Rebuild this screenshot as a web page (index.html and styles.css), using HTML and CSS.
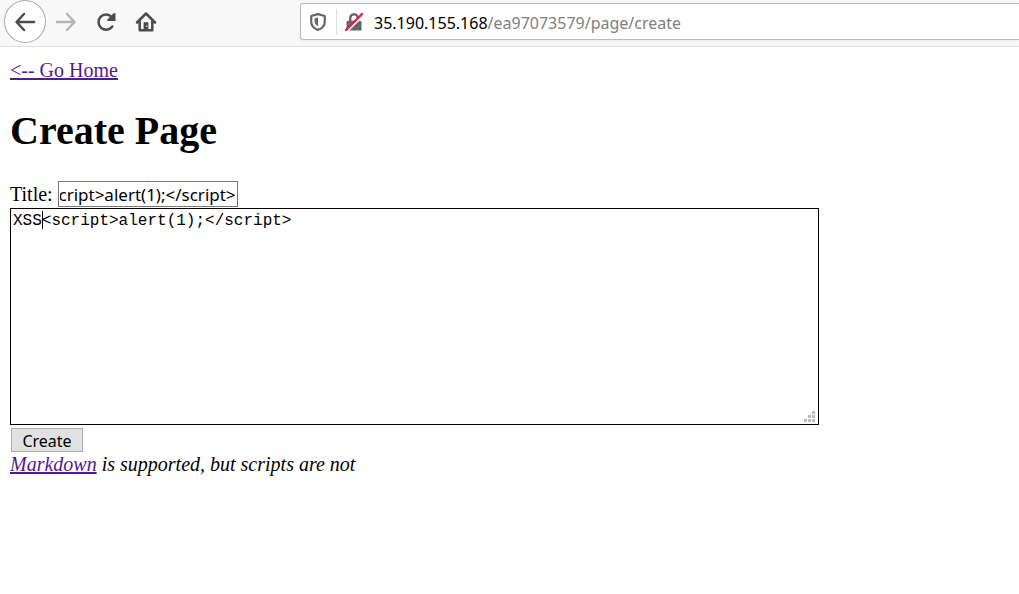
FILE: index.html
```html
<!DOCTYPE html>
<html lang="en">
<head>
<meta charset="utf-8">
<title>Create Page</title>
<link rel="stylesheet" href="styles.css">
</head>
<body>
<header class="toolbar">
  <nav class="nav-buttons" aria-label="Browser navigation">
    <button class="nav-button nav-back" type="button" aria-label="Back">
      <svg class="icon" viewBox="0 0 22 22"><path d="M20 11H3M10 3L2.5 11L10 19"/></svg>
    </button>
    <button class="nav-button nav-forward" type="button" aria-label="Forward" disabled>
      <svg class="icon" viewBox="0 0 22 22"><path d="M2 11H19M12 3L19.5 11L12 19"/></svg>
    </button>
    <button class="nav-button" type="button" aria-label="Reload">
      <svg class="icon" viewBox="0 0 22 22"><path d="M17.3 15.5A7.6 7.6 0 1 1 16.6 5.8"/><path class="solid" d="M20.5 2.2V10H12.4V8.6L18.6 2.2Z"/></svg>
    </button>
    <button class="nav-button" type="button" aria-label="Home">
      <svg class="icon" viewBox="0 0 22 22"><path d="M2 11.5L11 2.5L20 11.5M4.7 10V19.3H17.3V10"/><path class="solid" d="M8.6 11.2H13.4V19H8.6Z"/><path class="knob" d="M11.3 14.5H12.4V16H11.3Z"/></svg>
    </button>
  </nav>
  <div class="address-bar">
    <svg class="shield" viewBox="0 0 18 20"><path class="shield-line" d="M9 2.1L15.8 4V9.2C15.8 13.2 13 16.5 9 17.9C5 16.5 2.2 13.2 2.2 9.2V4Z"/><path class="shield-half" d="M9 5.5V14.4C6.8 13 5.6 11.3 5.6 9V6.3Z"/></svg>
    <span class="divider"></span>
    <svg class="lock" viewBox="0 0 20 20"><path class="shackle" d="M6.2 9V6.2A3.8 4 0 0 1 13.8 6.2V9"/><path class="lock-body" d="M4 8.8H16Q17.5 8.8 17.5 10.3V18.5H2.5V10.3Q2.5 8.8 4 8.8Z"/><path class="slash-gap" d="M3 19.5L19.5 3"/><path class="slash" d="M2 18L18 2"/></svg>
    <div class="address"><span class="host">35.190.155.168</span>/ea97073579/page/create</div>
  </div>
</header>
<main class="page">
  <a class="link" href="#home">&lt;-- Go Home</a>
  <h1 class="heading">Create Page</h1>
  <form class="form">
    <div class="title-row">
      <label for="title">Title:</label>
      <input class="title-input" id="title" type="text" value="&lt;script&gt;alert(1);&lt;/script&gt;">
    </div>
    <div class="editor">
      <textarea class="body-input" aria-label="Page body" spellcheck="false">XSS&lt;script&gt;alert(1);&lt;/script&gt;</textarea>
      <span class="caret"></span>
      <svg class="grip" viewBox="0 0 11 11"><path d="M8 0h3v3h-3zM4 4h3v3h-3zM8 4h3v3h-3zM0 8h3v3h-3zM4 8h3v3h-3zM8 8h3v3h-3z"/></svg>
    </div>
    <button class="create-button" type="button">Create</button>
  </form>
  <div class="note"><a class="link" href="#markdown">Markdown</a> is supported, but scripts are not</div>
</main>
<script src="script.js"></script>
</body>
</html>
```
FILE: styles.css
```css
* { box-sizing: border-box; }
body {
  margin: 0;
  background: #fff;
  color: #000;
  font: 20px/22px "Liberation Serif", serif;
}
.toolbar {
  display: flex;
  align-items: flex-start;
  gap: 134px;
  height: 47px;
  padding-left: 4px;
  background: #f8f8f8;
  border-bottom: 1px solid #dedede;
}
.nav-buttons { display: flex; flex: none; }
.nav-button {
  display: grid;
  place-items: center;
  width: 40px;
  height: 43px;
  padding: 0;
  border: 0;
  background: none;
  color: #4c4c4c;
}
.nav-back {
  width: 42px;
  border: 1px solid #aaa;
  border-radius: 50%;
  background: #fff;
}
.nav-forward { color: #b5b5b5; }
.icon {
  width: 22px;
  height: 22px;
  fill: none;
  stroke: currentColor;
  stroke-width: 2.5;
  stroke-linecap: round;
  stroke-linejoin: round;
}
.icon .solid { fill: currentColor; stroke: none; }
.icon .knob { fill: #fff; stroke: none; }
.address-bar {
  display: flex;
  flex: 1;
  align-items: center;
  min-width: 0;
  height: 37px;
  margin-top: 3px;
  padding-left: 8px;
  border: 1px solid #b9b9b9;
  border-right: 0;
  border-radius: 3px 0 0 3px;
  background: #fff;
  box-shadow: 0 1px 4px #0000000d;
}
.shield { width: 18px; height: 20px; flex: none; }
.shield-line { fill: none; stroke: #666; stroke-width: 2.2; stroke-linejoin: round; }
.shield-half { fill: #666; }
.divider { width: 1px; height: 26px; margin: 0 7px 0 9px; background: #ddd; flex: none; }
.lock { width: 20px; height: 20px; flex: none; }
.shackle { fill: none; stroke: #666; stroke-width: 2.4; }
.lock-body { fill: #666; }
.slash-gap { fill: none; stroke: #fff; stroke-width: 2; }
.slash { fill: none; stroke: #f5174b; stroke-width: 2.4; stroke-linecap: round; }
.address {
  margin-left: 10px;
  padding-top: 2px;
  color: #808080;
  font: 16px/24px "Noto Sans", sans-serif;
  white-space: nowrap;
}
.host { color: #000; }
.page { padding: 12px 10px; }
.link { color: #551a8b; }
.heading { margin: 27px 0; font-size: 40px; line-height: 46px; }
.title-row { display: flex; align-items: center; gap: 5px; }
.title-input {
  width: 180px;
  height: 26px;
  padding: 0 1px;
  border: 1px solid #767676;
  border-radius: 0;
  font: 17px/22px "Noto Sans", sans-serif;
}
.editor { position: relative; width: 100%; max-width: 809px; margin-top: 1px; }
.body-input {
  display: block;
  width: 100%;
  height: 217px;
  padding: 3px 2px 2px;
  border: 1px solid #000;
  border-radius: 0;
  outline: 0;
  resize: none;
  font: 16px/18px "Liberation Mono", monospace;
}
.caret { position: absolute; top: 3px; left: 32px; width: 1px; height: 18px; background: #000; }
.grip { position: absolute; right: 4px; bottom: 3px; width: 11px; height: 11px; fill: #bbb; }
.create-button {
  display: block;
  margin: 3px 1px 1px;
  width: 72px;
  height: 24px;
  padding: 1px 0 0;
  border: 1px solid #adadad;
  background: #e1e1e1;
  color: #000;
  font: 16px/22px "Noto Sans", sans-serif;
}
.note { font-style: italic; }
```
FILE: script.js
```js
// Keep the end of the title in view.
const title = document.getElementById("title");
title.scrollLeft = title.scrollWidth;
```
